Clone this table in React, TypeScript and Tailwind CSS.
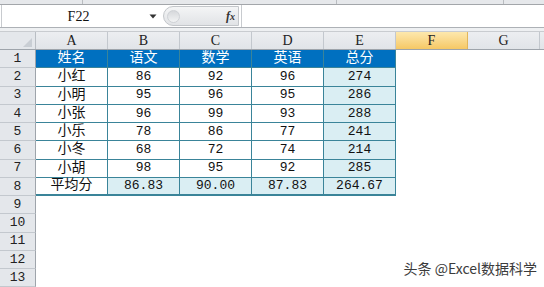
import React from "react";

const mono = { fontFamily: '"Liberation Mono", "DejaVu Sans Mono", monospace' };
const serif = { fontFamily: '"Liberation Serif", serif' };
const cjk = { fontFamily: '"Liberation Mono", "Noto Sans CJK SC", sans-serif' };

const cols = ["A", "B", "C", "D", "E", "F", "G"];

const data: string[][] = [
  ["姓名", "语文", "数学", "英语", "总分"],
  ["小红", "86", "92", "96", "274"],
  ["小明", "95", "96", "95", "286"],
  ["小张", "96", "99", "93", "288"],
  ["小乐", "78", "86", "77", "241"],
  ["小冬", "68", "72", "74", "214"],
  ["小胡", "98", "95", "92", "285"],
  ["平均分", "86.83", "90.00", "87.83", "264.67"],
];

function RowHeader({ n }: { n: number }) {
  return (
    <div
      className="w-[36px] shrink-0 h-full flex items-center justify-center bg-[#e4e7eb] border-r border-r-[#9ea4ab] border-b border-b-[#c3c8ce] text-[13px] text-[#222]"
      style={mono}
    >
      {n <= 13 ? n : ""}
    </div>
  );
}

function TableCell({ r, c, text }: { r: number; c: number; text: string }) {
  const isHeader = r === 0;
  const isLast = r === 7;
  const light = !isHeader && (c === 4 || (isLast && c > 0));
  const bg = isHeader ? "bg-[#0070c0] text-white" : light ? "bg-[#daeef3] text-[#111]" : "bg-white text-[#111]";
  const bottom = isLast ? "border-b-2" : "border-b";
  const cjkText = c === 0 || isHeader;
  return (
    <div
      className={`w-[72px] shrink-0 h-full flex items-center justify-center border-r border-[#3a8499] ${bottom} ${bg} ${cjkText ? "text-[14px]" : "text-[13px]"}`}
      style={cjkText ? cjk : mono}
    >
      {text}
    </div>
  );
}

export default function App() {
  const rows = Array.from({ length: 14 }, (_, i) => i + 1);
  return (
    <div className="w-[544px] h-[287px] overflow-hidden bg-white relative flex flex-col">
      {/* ribbon bottom strip */}
      <div className="h-[4px] shrink-0 flex bg-[#e6e8eb] border-b border-[#a3a6aa] box-content">
        <div className="w-[83px] border-r border-[#b9bcc0]" />
        <div className="w-[254px] border-r border-[#b9bcc0]" />
        <div className="w-[167px] border-r border-[#b9bcc0]" />
        <div className="flex-1" />
      </div>

      {/* formula bar */}
      <div className="h-[22px] shrink-0 flex items-center bg-white border-b border-[#adb1b6] box-content">
        <div className="w-[160px] h-full flex items-center border-l border-[#c8cbcf] ml-[1px]">
          <div className="flex-1 text-center text-[14px] text-[#111] pl-[6px]" style={serif}>
            F22
          </div>
          <svg width="8" height="5" viewBox="0 0 8 5" className="mr-[4px] mt-[1px]">
            <path d="M0.5 0.5 L7.5 0.5 L4 4.5 Z" fill="#333" />
          </svg>
        </div>
        <div className="ml-[2px] w-[76px] h-[20px] flex items-center rounded-l-full border border-[#c3c6ca] bg-gradient-to-b from-[#f4f5f6] to-[#e1e3e6]">
          <div className="ml-[3px] w-[13px] h-[13px] rounded-full bg-gradient-to-b from-[#d6d8db] to-[#f2f3f4] border border-[#cfd2d6]" />
          <div className="flex-1" />
          <div className="mr-[3px] text-[12px] italic font-bold text-[#333] leading-none" style={serif}>
            f<span className="text-[10px]">x</span>
          </div>
        </div>
        <div className="flex-1 h-full ml-[2px] bg-white border-l border-[#c8cbcf]" />
      </div>

      {/* gap */}
      <div className="h-[3px] shrink-0 bg-[#eef0f2] border-b border-[#c9ccd0] box-content" />

      {/* column headers */}
      <div className="h-[18px] shrink-0 flex border-b border-[#9ea4ab]">
        <div className="w-[36px] shrink-0 h-full bg-[#e4e7eb] border-r border-[#b9bec4] flex items-end justify-end pr-[3px] pb-[2px]">
          <svg width="9" height="9" viewBox="0 0 9 9">
            <path d="M9 0 L9 9 L0 9 Z" fill="#c9ced4" />
          </svg>
        </div>
        {cols.map((c) => (
          <div
            key={c}
            className={`w-[72px] shrink-0 h-full flex items-center justify-center border-r text-[14px] ${
              c === "F"
                ? "bg-gradient-to-b from-[#fde8ad] to-[#f6c864] border-[#e2b65a] text-[#222]"
                : "bg-gradient-to-b from-[#eceef1] to-[#e1e4e8] border-[#c3c8ce] text-[#222]"
            }`}
            style={serif}
          >
            {c}
          </div>
        ))}
        <div className="flex-1 h-full bg-gradient-to-b from-[#eceef1] to-[#e1e4e8]" />
      </div>

      {/* rows */}
      {rows.map((n) => (
        <div key={n} className="h-[18.25px] shrink-0 flex">
          <RowHeader n={n} />
          {n <= 8 &&
            data[n - 1].map((t, ci) => <TableCell key={ci} r={n - 1} c={ci} text={t} />)}
          <div className="flex-1" />
        </div>
      ))}

      {/* watermark */}
      <div
        className="absolute right-[7px] top-[260px] text-[14px] leading-[16px] text-[#3b3b3b] whitespace-nowrap"
        style={{
          fontFamily: '"Noto Sans CJK SC", sans-serif',
          textShadow: "0 0 2px #fff, 0 0 2px #fff",
        }}
      >
        头条 @Excel数据科学
      </div>
    </div>
  );
}
